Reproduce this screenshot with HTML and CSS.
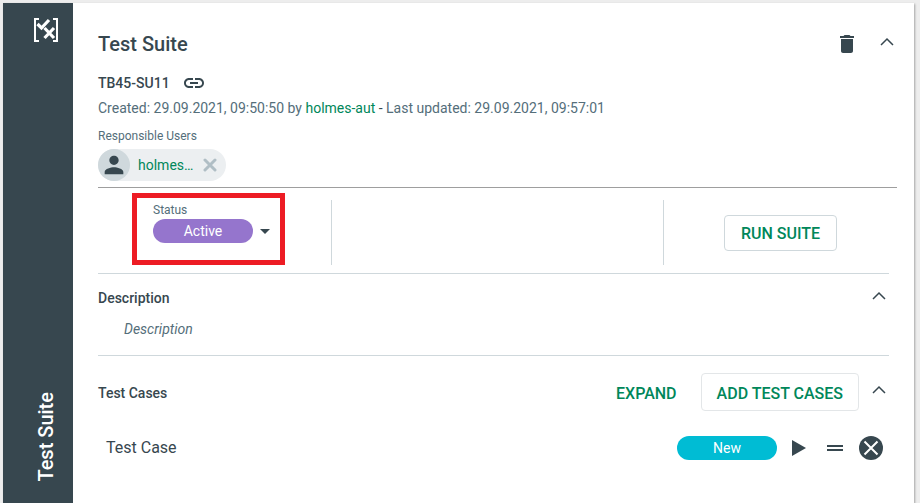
FILE: index.html
```html
<!DOCTYPE html>
<html lang="en">
<head>
<meta charset="utf-8">
<title>Test Suite</title>
<link rel="stylesheet" href="styles.css">
</head>
<body>
<div class="card">
  <aside class="rail">
    <svg class="logo" width="26" height="26" viewBox="0 0 26 26" fill="none" stroke="#fff" stroke-width="2">
      <path d="M6 2H2v22h4M20 2h4v22h-4"/>
      <path d="M4.500 7l4 4L16 3M11.500 11l9.500 10M21 11l-9.500 10" stroke-width="3.200"/>
    </svg>
    <span class="rail-title">Test Suite</span>
  </aside>
  <main class="content">
    <header class="head">
      <h1>Test Suite</h1>
      <button class="icon" aria-label="Delete"><svg width="24" height="24" viewBox="0 0 24 24"><path d="M6 19c0 1.100.9 2 2 2h8c1.100 0 2-.9 2-2V7H6v12zM19 4h-3.500l-1-1h-5l-1 1H5v2h14V4z"/></svg></button>
      <button class="icon fold" aria-label="Collapse suite"><svg width="24" height="24" viewBox="0 0 24 24"><path class="line" d="M6 15l6-6 6 6"/></svg></button>
    </header>
    <div class="ident">
      <span>TB45-SU11</span>
      <button class="icon" aria-label="Copy link"><svg width="24" height="24" viewBox="0 0 24 24"><path d="M3.900 12c0-1.710 1.390-3.100 3.100-3.100h4V7H7c-2.760 0-5 2.240-5 5s2.240 5 5 5h4v-1.900H7c-1.710 0-3.100-1.390-3.100-3.100zM8 13h8v-2H8v2zm9-6h-4v1.900h4c1.710 0 3.100 1.390 3.100 3.100s-1.390 3.100-3.100 3.100h-4V17h4c2.760 0 5-2.240 5-5s-2.240-5-5-5z"/></svg></button>
    </div>
    <p class="meta">Created: 29.09.2021, 09:50:50 by <a href="#">holmes-aut</a> <span class="dash">-</span> Last updated: 29.09.2021, 09:57:01</p>
    <section class="users">
      <h2 class="caption">Responsible Users</h2>
      <div class="chip">
        <span class="avatar"><svg width="28" height="28" viewBox="0 0 24 24"><path d="M12 12c2.210 0 4-1.790 4-4s-1.790-4-4-4-4 1.790-4 4 1.790 4 4 4zm0 2c-2.670 0-8 1.340-8 4v2h16v-2c0-2.660-5.330-4-8-4z"/></svg></span>
        <a href="#">holmes…</a>
        <button class="icon remove" aria-label="Remove user"><svg width="14" height="14" viewBox="0 0 14 14"><path d="M2 2l10 10M12 2L2 12"/></svg></button>
      </div>
    </section>
    <section class="summary">
      <div class="cell">
        <div class="status">
          <label class="caption" for="status">Status</label>
          <div class="status-pick">
            <select id="status" class="pill"><option>Active</option></select>
            <svg width="10" height="5" viewBox="0 0 10 5"><path d="M0 0h10L5 5z"/></svg>
          </div>
        </div>
      </div>
      <div class="cell middle"></div>
      <div class="cell run"><button class="action boxed">RUN SUITE</button></div>
    </section>
    <section class="block">
      <div class="block-head">
        <h2>Description</h2>
        <button class="icon fold" aria-label="Collapse description"><svg width="24" height="24" viewBox="0 0 24 24"><path class="line" d="M6 15l6-6 6 6"/></svg></button>
      </div>
      <p class="placeholder">Description</p>
    </section>
    <section class="block cases">
      <div class="block-head">
        <h2>Test Cases</h2>
        <button class="action">EXPAND</button>
        <button class="action boxed light">ADD TEST CASES</button>
        <button class="icon fold" aria-label="Collapse test cases"><svg width="24" height="24" viewBox="0 0 24 24"><path class="line" d="M6 15l6-6 6 6"/></svg></button>
      </div>
      <div class="case">
        <span class="case-name">Test Case</span>
        <span class="pill new">New</span>
        <button class="icon" aria-label="Run"><svg width="24" height="24" viewBox="0 0 24 24"><path d="M5 4v16l14-8z"/></svg></button>
        <button class="icon" aria-label="Reorder"><svg width="24" height="24" viewBox="0 0 24 24"><path d="M4 9h16v2H4zM4 13h16v2H4z"/></svg></button>
        <button class="icon" aria-label="Remove"><svg width="24" height="24" viewBox="0 0 24 24"><circle cx="12" cy="12" r="12"/><path class="cross" d="M5.500 5.500l13 13M18.500 5.500l-13 13"/></svg></button>
      </div>
    </section>
  </main>
</div>
</body>
</html>
```
FILE: styles.css
```css
* { box-sizing: border-box; }
body {
  margin: 0;
  min-height: 100vh;
  display: flex;
  padding: 3px 6px 0 3px;
  background: #ededed;
  color: #37474f;
  font: 14px/20px Roboto, sans-serif;
}
h1, h2, p { margin: 0; font-weight: 500; }
a { color: #00875a; text-decoration: none; }
button, select { font: inherit; color: inherit; border: 0; background: none; padding: 0; margin: 0; }
svg { display: block; fill: #37474f; }

.card { flex: 1; display: flex; background: #fff; box-shadow: 1px 1px 2px rgba(0, 0, 0, .3); }
.rail {
  width: 70px;
  display: flex;
  flex-direction: column;
  align-items: center;
  justify-content: space-between;
  padding: 14px 0 21px 16px;
  background: #37474f;
}
.logo { fill: none; }
.rail-title {
  color: #fff;
  font-size: 20px;
  line-height: 24px;
  font-weight: 500;
  writing-mode: vertical-rl;
  transform: rotate(180deg);
}
.content { flex: 1; min-width: 0; padding: 26px 17px 0 25px; }
.icon { flex: none; }
.line { fill: none; stroke: #37474f; stroke-width: 1.500; }

.head { display: flex; align-items: center; height: 30px; }
h1 { flex: 1; font-size: 20px; line-height: 24px; }
.head .icon { margin-left: 16px; }
.head .fold { margin-right: -2px; }
.fold { padding-bottom: 4px; }

.ident { display: flex; align-items: center; gap: 12px; height: 24px; margin-top: 12px; font-weight: 500; }
.meta { margin-top: 3px; color: #546e7a; font-weight: 400; }
.dash { color: #37474f; }
.caption { display: block; color: #546e7a; font-size: 12px; line-height: 16px; font-weight: 400; }

.users { margin-top: 10px; padding-bottom: 6px; border-bottom: 1px solid #9e9e9e; }
.chip {
  display: inline-flex;
  align-items: center;
  gap: 8px;
  height: 32px;
  margin-top: 5px;
  padding-right: 7px;
  border-radius: 16px;
  background: #eceff1;
  vertical-align: top;
}
.avatar { display: grid; place-items: center; width: 32px; height: 32px; border-radius: 50%; background: #cfd8dc; }
.remove { padding: 2px; }
.remove svg { fill: none; stroke: #b0bec5; stroke-width: 3; stroke-linecap: round; }

.summary { display: grid; grid-template-columns: 7fr 10fr 7fr; height: 85px; }
.middle { margin: 12px 0 8px; border: solid #cfd8dc; border-width: 0 1px; }
.status { width: 153px; height: 72px; margin: 5px 0 0 34px; padding: 4px 0 0 16px; border: 5px solid #ed1c24; }
.status-pick { display: flex; align-items: center; gap: 7px; margin-top: 1px; }
.pill {
  width: 100px;
  height: 24px;
  border-radius: 12px;
  background: #9575cd;
  color: #fff;
  line-height: 24px;
  text-align: center;
  text-align-last: center;
  appearance: none;
  font-weight: 400;
}
.run { display: grid; place-items: center; padding-top: 4px; }
.action { padding-top: 4px; color: #00875a; font-size: 16px; line-height: 20px; font-weight: 500; }
.boxed { padding: 8px 16px 6px; border: 1px solid #cfd8dc; border-radius: 4px; }
.light { padding: 10px 15px 6px; border-color: #e3e6e8; }

.block { margin-right: 8px; padding-top: 10px; border-top: 1px solid #cfd8dc; }
.block-head { display: flex; align-items: center; }
.block-head h2 { flex: 1; font-size: 14px; line-height: 20px; }
.block-head .fold { margin-right: -2px; }
.placeholder { padding: 7px 0 16px 26px; color: #546e7a; font-style: italic; font-weight: 400; }
.cases { padding-top: 17px; }
.cases h2 { padding-top: 2px; }
.cases .block-head .action { margin-right: 24px; }
.cases .block-head .light { margin-right: 8px; }
.case { display: flex; align-items: center; gap: 12px; margin-top: 25px; padding: 0 6px 0 8px; }
.case-name { flex: 1; font-size: 16px; }
.new { background: #00bcd4; margin-right: -2px; }
.cross { fill: none; stroke: #fff; stroke-width: 2; }
```
